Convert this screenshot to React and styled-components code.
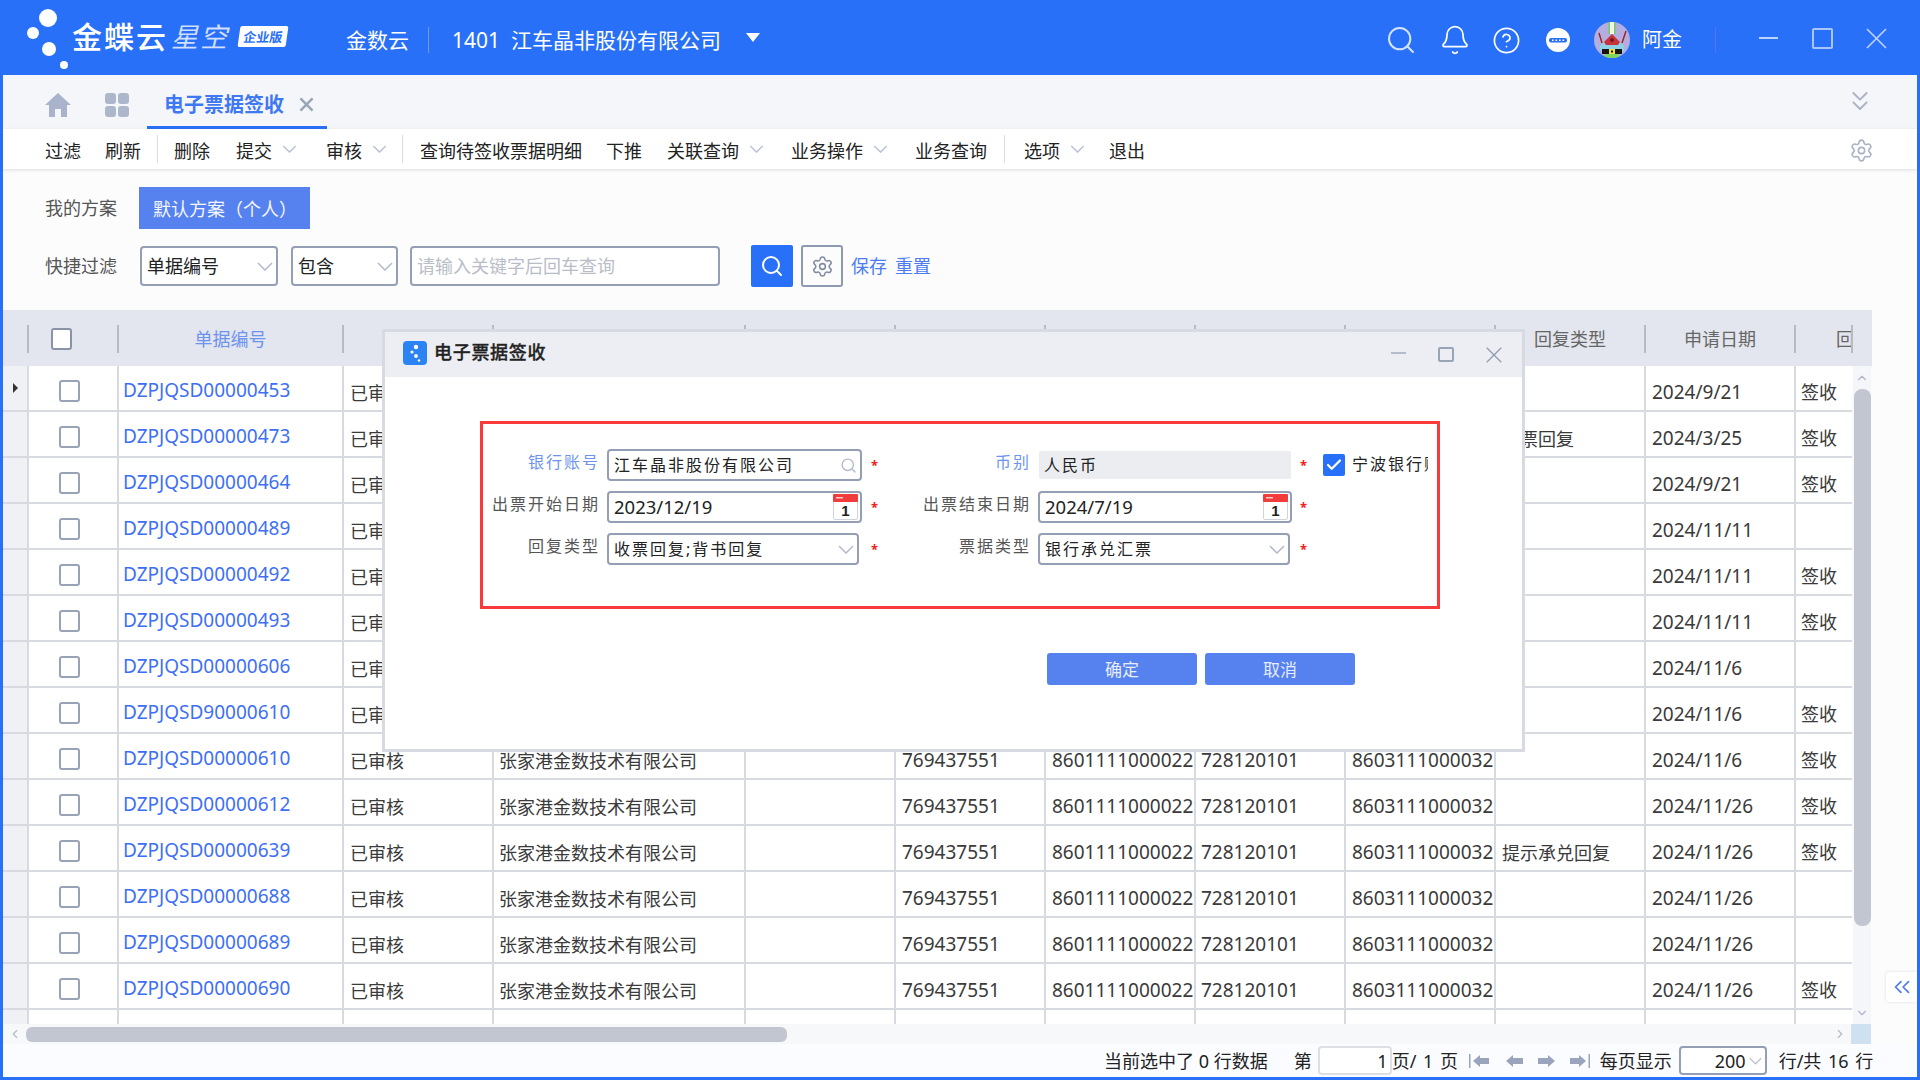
import React from 'react';
import styled, { createGlobalStyle } from 'styled-components';
import { Search, Bell, CircleHelp, ChevronsDown, Settings, ChevronsLeft, ChevronLeft, ChevronRight, ChevronUp, ChevronDown, Check } from 'lucide-react';

const Global = createGlobalStyle`
  html, body { margin: 0; padding: 0; width: 1920px; height: 1080px; overflow: hidden; }
  body { font-family: "Noto Sans", "Noto Sans CJK SC", sans-serif; font-size: 18px; color: #333; }
  * { box-sizing: border-box; }
`;

const BLUE = '#2970f8';
const LINE = '#d8dae2';

const Page = styled.div`
  position: relative; width: 1920px; height: 1080px; background: ${BLUE};
  display: flex; flex-direction: column; overflow: hidden;
`;
const TopBar = styled.header`
  height: 75px; flex: none; display: flex; align-items: center; color: #fff;
`;
const LogoMark = styled.svg`width: 72px; height: 75px; flex: none;`;
const LogoMain = styled.span`font-size: 30px; font-weight: 500; letter-spacing: 2px; line-height: 40px; margin-top: -2px; white-space: nowrap;`;
const LogoSub = styled.span`font-size: 27px; font-style: italic; font-weight: 400; letter-spacing: 2px; color: rgba(255,255,255,.78); margin-left: 3px; line-height: 40px; margin-top: -2px; white-space: nowrap;`;
const Badge = styled.span`
  width: 48px; height: 21px; margin-left: 10px; background: #fff; color: ${BLUE}; font-size: 13px; font-weight: 700;
  display: flex; align-items: center; justify-content: center; transform: skewX(-8deg); border-radius: 2px; margin-top: -3px; white-space: nowrap;
`;
const OrgText = styled.span`font-size: 21px; line-height: 30px; margin-left: ${p => p.$ml}px; margin-top: 5px; white-space: nowrap;`;
const TopSep = styled.span`width: 1px; height: 26px; background: ${p => p.$c}; margin-left: ${p => p.$ml}px; flex: none; margin-top: 5px;`;
const Caret = styled.span`
  margin-left: 25px; margin-top: 0; width: 0; height: 0; border-left: 7px solid transparent; border-right: 7px solid transparent; border-top: 9px solid #fff;
`;
const TopRight = styled.div`margin-left: auto; padding-right: 33px; display: flex; align-items: center;`;
const TopIcon = styled.span`display: flex; margin-left: ${p => p.$ml || 0}px; margin-top: 5px; color: ${p => p.$c || '#fff'};`;
const UserName = styled.span`font-size: 20px; margin-left: 12px; margin-top: 5px; width: 40px; white-space: nowrap; line-height: 30px;`;
const WinMin = styled.span`width: 19px; height: 2px; background: rgba(255,255,255,.7); margin-left: 43px; margin-top: 1px;`;
const WinMax = styled.span`width: 21px; height: 21px; border: 2px solid rgba(255,255,255,.6); border-radius: 2px; margin-left: 34px; margin-top: 1px;`;
const WinClose = styled.svg`width: 21px; height: 21px; margin-left: 33px; margin-top: 1px; flex: none;`;

const Work = styled.main`
  flex: 1; min-height: 0; margin: 0 3px 3px; background: #fcfcfd; display: flex; flex-direction: column; position: relative;
`;
const TabRow = styled.div`
  height: 54px; flex: none; background: #f5f6fa; display: flex; align-items: center; padding: 0 41px 0 42px;
`;
const HomeIcon = styled.svg`width: 26px; height: 24px; flex: none; margin-top: 6px;`;
const AppsIcon = styled.svg`width: 24px; height: 24px; flex: none; margin-left: 34px; margin-top: 6px;`;
const Tab = styled.div`
  width: 180px; height: 54px; margin-left: 18px; padding: 8px 0 0 17px; border-bottom: 3px solid ${BLUE};
  display: flex; align-items: center; color: #3f78f3; font-size: 20px; font-weight: 700; line-height: 30px; white-space: nowrap;
`;
const TabClose = styled.svg`width: 15px; height: 15px; margin-left: 15px; flex: none; color: #9aa5b8;`;
const PushRight = styled.span`margin-left: auto; display: flex; color: #a9b2c4; margin-top: ${p => p.$mt || 0}px;`;
const ToolBar = styled.nav`
  height: 40px; flex: none; background: #fff; display: flex; align-items: center; padding: 0 43px 0 42px;
  box-shadow: 0 1px 3px rgba(60,70,90,.18); position: relative;
`;
const Tool = styled.span`
  display: flex; align-items: center; margin-left: ${p => p.$ml || 0}px; margin-top: 3px; color: #222; line-height: 26px; white-space: nowrap;
  svg { margin: -4px 2px 0 10px; }
`;
const ToolSep = styled.span`width: 1px; height: 28px; background: #d9dde6; margin-left: ${p => p.$ml}px;`;

const Filters = styled.section`
  height: 141px; flex: none; padding: 18px 0 0 42px; display: flex; flex-direction: column; gap: 16px;
`;
const FilterRow = styled.div`display: flex; align-items: center; height: ${p => p.$h}px;`;
const FilterLabel = styled.span`width: 94px; color: #555; flex: none; line-height: 26px;`;
const Scheme = styled.span`
  width: 171px; height: 42px; background: #5682f0; color: #f4f6fe; display: flex; align-items: center; padding-left: 14px; white-space: nowrap;
`;
const Select = styled.div`
  width: ${p => p.$w}px; height: 40px; margin-left: ${p => p.$ml || 0}px; border: 2px solid #949fb5; border-radius: 4px; background: #fff;
  display: flex; align-items: center; justify-content: space-between; padding: 0 3px 0 5px; color: #222; line-height: 26px; white-space: nowrap;
`;
const Keyword = styled.input`
  width: 310px; height: 40px; margin-left: 12px; border: 2px solid #949fb5; border-radius: 4px; background: #fff; padding: 0 5px; font: inherit; outline: none;
  &::placeholder { color: #b9bdc7; opacity: 1; }
`;
const SearchBtn = styled.span`
  width: 42px; height: 42px; margin-left: 31px; border-radius: 2px; background: ${BLUE}; color: #fff; display: flex; align-items: center; justify-content: center;
`;
const GearBtn = styled.span`
  width: 42px; height: 42px; margin-left: 8px; border-radius: 3px; border: 2px solid #8e9ab2; color: #7f8ba3; display: flex; align-items: center; justify-content: center;
`;
const TextLink = styled.span`color: #4d7cf2; margin-left: ${p => p.$ml}px; line-height: 26px;`;

const COLS = '24px 90px 225px 150px 252px 150px 150px 150px 150px 150px 150px 150px';
const HeadRow = styled.div`
  height: 56px; width: 1869px; flex: none; background: #e3e6ee; display: grid; grid-template-columns: ${COLS} 57px 1fr; align-items: center;
`;
const HeadCell = styled.div`
  height: 28px; border-left: ${p => p.$first ? 0 : '2px solid #b6bac5'}; display: flex; align-items: center; justify-content: ${p => p.$left ? 'flex-start' : 'center'};
  padding-left: ${p => p.$left ? 40 : 0}px; color: ${p => p.$blue ? '#6e93ef' : '#666'}; overflow: hidden; white-space: nowrap; line-height: 26px; margin-top: 1px;
`;
const HeadBox = styled.span`
  width: 21px; height: 22px; border: 2px solid #8a94a8; border-radius: 3px; background: #fff; display: block; margin-right: 24px;
`;
const TableBody = styled.div`height: 658px; flex: none; display: flex;`;
const Rows = styled.div`width: 1849px; height: 658px; overflow: hidden; flex: none;`;
const Row = styled.div`
  display: grid; grid-template-columns: ${COLS} 1fr; height: 46px; border-bottom: 2px solid ${LINE}; background: #fff;
`;
const Marker = styled.div`background: #f0f1f5; display: flex; align-items: center; padding-left: 10px;`;
const Tri = styled.span`width: 0; height: 0; border-top: 5px solid transparent; border-bottom: 5px solid transparent; border-left: 5px solid #333;`;
const Cell = styled.div`
  border-left: 2px solid ${LINE}; padding: ${p => p.$top || 14}px 0 0 ${p => p.$pl || 6}px; overflow: hidden; white-space: nowrap; line-height: 26px;
  font-size: ${p => p.$fs || 18}px; color: ${p => p.$c || '#3a3a3a'};
`;
const CheckCell = styled(Cell)`display: flex; justify-content: center; padding: 14px 7px 0 0;`;
const Box = styled.span`width: 21px; height: 22px; border: 2px solid #99a3b8; border-radius: 3px; background: #fff; display: block; flex: none;`;
const VBar = styled.div`
  width: 18px; margin-left: 1px; flex: none; background: #f5f6fa; display: flex; flex-direction: column; align-items: center; color: #aeb6c6;
`;
const VThumb = styled.div`width: 17px; height: 537px; background: #c2c6d0; border-radius: 8px; flex: none;`;
const ArrowSlot = styled.span`height: ${p => p.$h}px; display: flex; align-items: ${p => p.$end ? 'flex-end' : 'center'}; padding-bottom: ${p => p.$end ? 4 : 0}px; flex: none;`;
const HBarRow = styled.div`height: 20px; flex: none; display: flex;`;
const HBar = styled.div`width: 1848px; background: #f7f8fa; display: flex; align-items: center; color: #b4bbc9; padding: 0 4px 0 5px; flex: none;`;
const HThumb = styled.div`width: 761px; height: 15px; background: #c2c6d0; border-radius: 6px; margin-left: 4px;`;
const Corner = styled.div`width: 20px; background: #cfe0f0;`;
const HRight = styled.span`margin-left: auto; display: flex;`;

const Footer = styled.footer`
  flex: 1; min-height: 0; display: flex; align-items: center; padding-left: 1101px; background: #fbfcff; color: #222; white-space: nowrap; line-height: 26px;
`;
const FootText = styled.span`margin-left: ${p => p.$ml || 0}px; flex: none; width: ${p => p.$w ? p.$w + 'px' : 'auto'}; word-spacing: ${p => p.$ws || 0}px;`;
const PageInput = styled.span`
  width: 74px; height: 29px; margin-left: 6px; border: 2px solid #dcdfe6; border-radius: 4px; background: #fff; text-align: right; padding-right: 2px; line-height: 26px; flex: none;
`;
const NavIcon = styled.svg`width: ${p => p.$w}px; height: 14px; margin-left: ${p => p.$ml}px; flex: none; color: #9aa5bd;`;
const SizeSelect = styled.span`
  width: 88px; height: 29px; margin-left: 5px; border: 2px solid #949fb5; border-radius: 4px; background: #fff; display: flex; align-items: center; justify-content: flex-end; padding-right: 3px; flex: none; gap: 3px;
`;
const SideTab = styled.div`
  position: absolute; left: 1886px; top: 972px; width: 31px; height: 30px; background: #fff; border-radius: 4px 0 0 4px; color: #4d7cf2; display: flex; align-items: center; justify-content: center;
  box-shadow: 0 0 3px rgba(80,90,120,.2);
`;

const Dialog = styled.div`
  position: absolute; left: 382px; top: 329px; width: 1143px; height: 423px; border: 3px solid ${LINE}; background: #fff; display: flex; flex-direction: column;
`;
const DlgTitle = styled.div`height: 45px; flex: none; background: #eceef3; display: flex; align-items: center; padding: 0 20px 0 18px; color: #222;`;
const DlgIcon = styled.svg`width: 24px; height: 24px; flex: none; margin-right: 7px; margin-top: -4px;`;
const DlgName = styled.span`font-size: 18px; letter-spacing: .7px; font-weight: 500; line-height: 26px; margin-top: -5px; -webkit-text-stroke: .3px #222; white-space: nowrap;`;
const DlgMin = styled.span`width: 15px; height: 1.5px; background: #b5bcca; margin-left: auto; margin-top: -3px;`;
const DlgMax = styled.span`width: 16px; height: 15px; border: 2px solid #9aa4b8; border-radius: 2px; margin-left: 32px;`;
const DlgClose = styled.svg`width: 16px; height: 16px; margin-left: 32px; flex: none; color: #8f99ac;`;
const RedBox = styled.div`
  width: 960px; height: 188px; margin: 44px 0 0 95px; border: 3px solid #f83a3a; padding-top: 25px; flex: none;
`;
const FormGrid = styled.div`
  display: grid; grid-template-columns: 115px 255px 158px 253px 130px; column-gap: 9px; grid-auto-rows: 32px; row-gap: 10px;
`;
const Label = styled.span`
  font-size: 16px; letter-spacing: 2px; line-height: 24px; color: ${p => p.$blue ? '#6e93ef' : '#555'}; white-space: nowrap; text-align: right; padding-top: 1px; margin-right: -2px; align-self: start;
`;
const LabelWrap = styled.div`display: flex; justify-content: space-between; align-items: flex-start;`;
const Star = styled.span`color: #f21c1c; font-size: 13px; line-height: 32px; font-weight: 700;`;
const Field = styled.div`
  width: ${p => p.$w || 255}px; height: 32px; border: 2px solid #949fb5; border-radius: 4px; background: #fff; display: flex; align-items: center; justify-content: space-between;
  padding: 0 ${p => p.$pr || 3}px 0 5px; color: #222; font-size: ${p => p.$num ? 18.5 : 16}px; letter-spacing: ${p => p.$num ? 0 : 2}px; white-space: nowrap; line-height: 24px;
`;
const ReadOnly = styled.div`
  width: 252px; height: 28px; margin: 2px 0 0 1px; background: #ebedf1; border-radius: 2px; padding-left: 5px; display: flex; align-items: center; font-size: 16px; letter-spacing: 2px; color: #222; line-height: 24px;
`;
const CheckWrap = styled.div`display: flex; align-items: flex-start; gap: 7px;`;
const Checked = styled.span`width: 22px; height: 22px; background: ${BLUE}; border-radius: 2px; color: #fff; display: flex; align-items: center; justify-content: center; margin: 5px 0 0 9px; flex: none;`;
const CheckLabel = styled.span`width: 76px; overflow: hidden; white-space: nowrap; font-size: 16px; letter-spacing: 2px; color: #222; line-height: 24px; padding-top: 3px;`;
const Actions = styled.div`display: flex; gap: 8px; margin: 44px 0 0 662px;`;
const DlgButton = styled.span`
  width: 150px; height: 32px; background: #5682f0; color: #e8edfc; border-radius: 3px; font-size: 17px; display: flex; align-items: center; justify-content: center; line-height: 24px; padding-top: 1px;
`;

const Chev = ({ w = 16, h = 9, c = '#b4bccd' }) => (
  <svg width={w} height={h} viewBox="0 0 16 9" fill="none" stroke={c} strokeWidth="1.6"><path d="M1 1l7 7 7-7" /></svg>
);
const Calendar = () => (
  <svg width="25" height="26" viewBox="0 0 25 26">
    <rect x="0.5" y="0.5" width="24" height="25" rx="1.5" fill="#fff" stroke="#cfd3db" />
    <rect x="0" y="0" width="25" height="8" rx="1" fill="#f23b3b" />
    <rect x="3" y="3" width="7" height="1.5" fill="#fbc9c9" />
    <text x="12.5" y="22" textAnchor="middle" fontSize="15" fontWeight="700" fontFamily="Liberation Sans, sans-serif" fill="#222">1</text>
  </svg>
);
const CrossPath = () => <path d="M1 1l19 19M20 1L1 20" fill="none" stroke="currentColor" strokeWidth="1.6" />;
const Avatar = () => (
  <svg width="36" height="36" viewBox="0 0 36 36">
    <defs><clipPath id="av"><circle cx="18" cy="18" r="18" /></clipPath></defs>
    <g clipPath="url(#av)">
      <rect width="36" height="36" fill="#b4aee0" />
      <path d="M14.500 0h1.500v12h-1.500zM20 0h1.500v12H20z" fill="#6fcf5b" />
      <path d="M16 0h4v12h-4z" fill="#f4f4ea" />
      <path d="M8 21L5 11M28 21L32 9" stroke="#a31d1d" strokeWidth="1.4" />
      <path d="M6 24l5-5h14l5 5v5H6z" fill="#8ed0e4" />
      <path d="M18 12l8 8-2 3H12l-2-3z" fill="#c8323a" />
      <circle cx="18" cy="18" r="2" fill="#7a1620" />
      <rect x="8" y="27" width="20" height="5" fill="#141414" />
      <rect x="15" y="27" width="6" height="5" fill="#f2e23a" />
      <rect x="17" y="28.500" width="2" height="2" fill="#141414" />
      <rect x="11" y="32" width="14" height="4" fill="#7fd65c" />
    </g>
  </svg>
);

const ROWS = [
  ['DZPJQSD00000453', '', '2024/9/21', '签收'],
  ['DZPJQSD00000473', '收票回复', '2024/3/25', '签收'],
  ['DZPJQSD00000464', '', '2024/9/21', '签收'],
  ['DZPJQSD00000489', '', '2024/11/11', ''],
  ['DZPJQSD00000492', '', '2024/11/11', '签收'],
  ['DZPJQSD00000493', '', '2024/11/11', '签收'],
  ['DZPJQSD00000606', '', '2024/11/6', ''],
  ['DZPJQSD90000610', '', '2024/11/6', '签收'],
  ['DZPJQSD00000610', '', '2024/11/6', '签收'],
  ['DZPJQSD00000612', '', '2024/11/26', '签收'],
  ['DZPJQSD00000639', '提示承兑回复', '2024/11/26', '签收'],
  ['DZPJQSD00000688', '', '2024/11/26', ''],
  ['DZPJQSD00000689', '', '2024/11/26', ''],
  ['DZPJQSD00000690', '', '2024/11/26', '签收'],
];
const TOOLS = [
  { t: '过滤', ml: 0 }, { t: '刷新', ml: 24 }, { sep: 16 }, { t: '删除', ml: 16 },
  { t: '提交', ml: 26, c: 1 }, { t: '审核', ml: 27, c: 1 }, { sep: 13 },
  { t: '查询待签收票据明细', ml: 17 }, { t: '下推', ml: 24 }, { t: '关联查询', ml: 25, c: 1 },
  { t: '业务操作', ml: 25, c: 1 }, { t: '业务查询', ml: 25 }, { sep: 17 }, { t: '选项', ml: 19, c: 1 }, { t: '退出', ml: 22 },
];
const HEAD = ['单据编号', '', '', '', '', '', '', '', '回复类型', '申请日期'];

export default function App() {
  return (
    <Page>
      <Global />
      <TopBar>
        <LogoMark viewBox="0 0 72 75">
          <circle cx="48" cy="18" r="9" fill="#fff" /><circle cx="33" cy="33" r="6" fill="#fff" />
          <circle cx="49" cy="49" r="7" fill="#fff" /><circle cx="64" cy="65" r="4" fill="#fff" />
        </LogoMark>
        <LogoMain>金蝶云</LogoMain>
        <LogoSub>星空</LogoSub>
        <Badge>企业版</Badge>
        <OrgText $ml={59}>金数云</OrgText>
        <TopSep $ml={19} $c="rgba(255,255,255,.3)" />
        <OrgText $ml={23}>1401&nbsp; 江车晶非股份有限公司</OrgText>
        <Caret />
        <TopRight>
          <TopIcon $c="#d4e3ff"><Search size={32} strokeWidth={1.5} /></TopIcon>
          <TopIcon $ml={22}><Bell size={32} strokeWidth={1.3} /></TopIcon>
          <TopIcon $ml={21}><CircleHelp size={29} strokeWidth={1.4} /></TopIcon>
          <TopIcon $ml={25}>
            <svg width="24" height="24" viewBox="0 0 24 24">
              <circle cx="12" cy="12" r="12" fill="#fff" />
              <rect x="3" y="10" width="18" height="4.5" rx="2" fill={BLUE} />
              <path d="M6 11.500h1.600v1.500H6zM9.500 11.500h1.600v1.500H9.500zM13 11.500h1.600v1.500H13zM16.500 11.500h1.600v1.500h-1.600z" fill="#fff" />
            </svg>
          </TopIcon>
          <TopIcon $ml={24}><Avatar /></TopIcon>
          <UserName>阿金</UserName>
          <TopSep $ml={33} $c="#5d70f0" />
          <WinMin />
          <WinMax />
          <WinClose viewBox="0 0 21 21" style={{ color: 'rgba(255,255,255,.7)' }}><CrossPath /></WinClose>
        </TopRight>
      </TopBar>

      <Work>
        <TabRow>
          <HomeIcon viewBox="0 0 26 24"><path d="M13 0L0 12h4v12h6v-8h6v8h6V12h4z" fill="#a9b4cc" /></HomeIcon>
          <AppsIcon viewBox="0 0 24 24" fill="#adb7cc">
            <rect width="11" height="11" rx="3" /><rect x="13" width="11" height="11" rx="3" />
            <rect y="13" width="11" height="11" rx="3" /><rect x="13" y="13" width="11" height="11" rx="3" />
          </AppsIcon>
          <Tab>电子票据签收<TabClose viewBox="0 0 21 21"><path d="M2 2l17 17M19 2L2 19" fill="none" stroke="currentColor" strokeWidth="3.500" /></TabClose></Tab>
          <PushRight $mt={-3}><ChevronsDown size={32} strokeWidth={1.4} /></PushRight>
        </TabRow>
        <ToolBar>
          {TOOLS.map((x, i) => x.sep
            ? <ToolSep key={i} $ml={x.sep} />
            : <Tool key={i} $ml={x.ml}>{x.t}{x.c ? <Chev w={15} h={8} c="#b9c2d4" /> : null}</Tool>)}
          <PushRight $mt={2}><Settings size={25} strokeWidth={1.5} /></PushRight>
        </ToolBar>
        <Filters>
          <FilterRow $h={42}>
            <FilterLabel>我的方案</FilterLabel>
            <Scheme>默认方案（个人）</Scheme>
          </FilterRow>
          <FilterRow $h={42}>
            <FilterLabel>快捷过滤</FilterLabel>
            <Select $w={138} $ml={1}>单据编号<Chev /></Select>
            <Select $w={107} $ml={13}>包含<Chev /></Select>
            <Keyword placeholder="请输入关键字后回车查询" />
            <SearchBtn><Search size={24} strokeWidth={2} /></SearchBtn>
            <GearBtn><Settings size={23} strokeWidth={1.6} /></GearBtn>
            <TextLink $ml={8}>保存</TextLink>
            <TextLink $ml={8}>重置</TextLink>
          </FilterRow>
        </Filters>
        <HeadRow>
          <HeadCell $first />
          <HeadCell><HeadBox /></HeadCell>
          {HEAD.map((h, i) => <HeadCell key={i} $blue={i === 0}>{h}</HeadCell>)}
          <HeadCell $left>回复类型</HeadCell>
          <HeadCell />
        </HeadRow>
        <TableBody>
          <Rows>
            {ROWS.map((r, i) => (
              <Row key={r[0] + i}>
                <Marker>{i === 0 ? <Tri /> : null}</Marker>
                <CheckCell><Box /></CheckCell>
                <Cell $c="#3e6ff5" $fs={19} $top={11} $pl={4}>{r[0]}</Cell>
                <Cell>已审核</Cell>
                <Cell $pl={5}>张家港金数技术有限公司</Cell>
                <Cell />
                <Cell $fs={19} $top={13}>769437551</Cell>
                <Cell $fs={19} $top={13}>8601111000022</Cell>
                <Cell $fs={19} $top={13} $pl={5}>728120101</Cell>
                <Cell $fs={19} $top={13}>8603111000032</Cell>
                <Cell>{r[1]}</Cell>
                <Cell $fs={19} $top={13}>{r[2]}</Cell>
                <Cell $pl={5} $top={13}>{r[3]}</Cell>
              </Row>
            ))}
            <Row>
              <Marker /><Cell /><Cell /><Cell /><Cell /><Cell /><Cell /><Cell /><Cell /><Cell /><Cell /><Cell /><Cell />
            </Row>
          </Rows>
          <VBar>
            <ArrowSlot $h={23}><ChevronUp size={14} /></ArrowSlot>
            <VThumb />
            <ArrowSlot $h={98} $end><ChevronDown size={14} /></ArrowSlot>
          </VBar>
        </TableBody>
        <HBarRow>
          <HBar>
            <ChevronLeft size={14} />
            <HThumb />
            <HRight><ChevronRight size={14} /></HRight>
          </HBar>
          <Corner />
        </HBarRow>
        <Footer>
          <FootText>当前选中了 0 行数据</FootText>
          <FootText $ml={26}>第</FootText>
          <PageInput>1</PageInput>
          <FootText $w={68} $ws={2}>页/ 1 页</FootText>
          <NavIcon $w={21} $ml={9} viewBox="0 0 21 14" fill="currentColor"><path d="M0 0h1.500v14H0zM4 7l7-6v3h9v6h-9v3z" /></NavIcon>
          <NavIcon $w={18} $ml={16} viewBox="0 0 18 14" fill="currentColor"><path d="M0 7l7-6v3h10v6H7v3z" /></NavIcon>
          <NavIcon $w={18} $ml={13} viewBox="0 0 18 14" fill="currentColor"><path d="M18 7l-7-6v3H1v6h10v3z" /></NavIcon>
          <NavIcon $w={21} $ml={14} viewBox="0 0 21 14" fill="currentColor"><path d="M19.500 0H21v14h-1.500zM17 7l-7-6v3H1v6h9v3z" /></NavIcon>
          <FootText $ml={10} $w={74}>每页显示</FootText>
          <SizeSelect>200<Chev w={13} h={8} /></SizeSelect>
          <FootText $ml={12} $ws={2}>行/共 16 行</FootText>
        </Footer>
      </Work>

      <SideTab><ChevronsLeft size={26} strokeWidth={1.6} /></SideTab>

      <Dialog>
        <DlgTitle>
          <DlgIcon viewBox="0 0 24 24">
            <rect width="24" height="24" rx="4" fill="#2c84f4" />
            <circle cx="13" cy="6" r="2.200" fill="#fff" /><circle cx="9" cy="11" r="1.600" fill="#fff" />
            <circle cx="13" cy="15" r="1.900" fill="#fff" /><circle cx="16" cy="19.500" r="1.200" fill="#fff" />
          </DlgIcon>
          <DlgName>电子票据签收</DlgName>
          <DlgMin />
          <DlgMax />
          <DlgClose viewBox="0 0 21 21"><CrossPath /></DlgClose>
        </DlgTitle>
        <RedBox>
          <FormGrid>
            <Label $blue>银行账号</Label>
            <Field>江车晶非股份有限公司<Search size={17} color="#b4bccd" strokeWidth={2} /></Field>
            <LabelWrap><Star>*</Star><Label $blue>币别</Label></LabelWrap>
            <ReadOnly>人民币</ReadOnly>
            <CheckWrap>
              <Star>*</Star>
              <Checked><Check size={18} strokeWidth={3} /></Checked>
              <CheckLabel>宁波银行账号</CheckLabel>
            </CheckWrap>

            <Label>出票开始日期</Label>
            <Field $num $pr={2}>2023/12/19<Calendar /></Field>
            <LabelWrap><Star>*</Star><Label>出票结束日期</Label></LabelWrap>
            <Field $num $w={254} $pr={2}>2024/7/19<Calendar /></Field>
            <CheckWrap><Star>*</Star></CheckWrap>

            <Label>回复类型</Label>
            <Field $w={252} $pr={3}>收票回复;背书回复<Chev /></Field>
            <LabelWrap><Star>*</Star><Label>票据类型</Label></LabelWrap>
            <Field $w={252} $pr={3}>银行承兑汇票<Chev /></Field>
            <CheckWrap><Star>*</Star></CheckWrap>
          </FormGrid>
        </RedBox>
        <Actions>
          <DlgButton>确定</DlgButton>
          <DlgButton>取消</DlgButton>
        </Actions>
      </Dialog>
    </Page>
  );
}
